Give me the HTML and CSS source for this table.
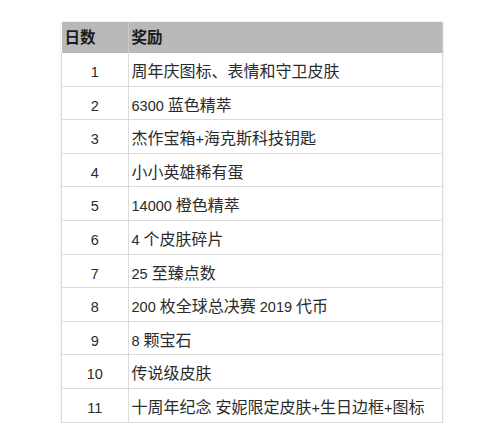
FILE: index.html
```html
<!DOCTYPE html>
<html lang="zh">
<head>
<meta charset="utf-8">
<link rel="stylesheet" href="styles.css">
</head>
<body>
<table class="rewards">
  <thead>
    <tr><th class="day">日数</th><th class="reward">奖励</th></tr>
  </thead>
  <tbody>
    <tr><td class="num">1</td><td>周年庆图标、表情和守卫皮肤</td></tr>
    <tr><td class="num">2</td><td><span class="lat">6300 </span>蓝色精萃</td></tr>
    <tr><td class="num">3</td><td>杰作宝箱<span class="lat">+</span>海克斯科技钥匙</td></tr>
    <tr><td class="num">4</td><td>小小英雄稀有蛋</td></tr>
    <tr><td class="num">5</td><td><span class="lat">14000 </span>橙色精萃</td></tr>
    <tr><td class="num">6</td><td><span class="lat">4 </span>个皮肤碎片</td></tr>
    <tr><td class="num">7</td><td><span class="lat">25 </span>至臻点数</td></tr>
    <tr><td class="num">8</td><td><span class="lat">200 </span>枚全球总决赛<span class="lat"> 2019 </span>代币</td></tr>
    <tr><td class="num">9</td><td><span class="lat">8 </span>颗宝石</td></tr>
    <tr><td class="num">10</td><td>传说级皮肤</td></tr>
    <tr><td class="num">11</td><td>十周年纪念<span class="lat"> </span>安妮限定皮肤<span class="lat">+</span>生日边框<span class="lat">+</span>图标</td></tr>
  </tbody>
</table>
</body>
</html>
```
FILE: styles.css
```css
html, body {
  margin: 0;
  padding: 0;
  background: #ffffff;
}
body {
  padding: 22px 0 0 61px;
  font-family: "Liberation Sans", "Noto Sans CJK SC", sans-serif;
  color: #2b2b2b;
  font-size: 16px;
}
.rewards {
  border-collapse: collapse;
  width: 382px;
  box-shadow: 0 0 2px rgba(0,0,0,0.15);
}
.rewards th {
  background: #b9b9b9;
  line-height: 20px;
  height: 20px;
  padding: 6px 3px 5px 3px;
  text-align: left;
  font-weight: bold;
  font-size: 15.5px;
  color: #1a1a1a;
  border-right: 1px solid #c8c8c8;
}
.rewards th.day {
  width: 60px;
}
.rewards td {
  line-height: 20px;
  height: 20px;
  padding: 9px 3px 3.6px 3px;
  border: 1px solid #dcdcdc;
  border-top: none;
  vertical-align: middle;
  white-space: nowrap;
}
.rewards td.num {
  text-align: center;
  font-size: 14.5px;
}
.lat {
  font-size: 14.5px;
  line-height: 1;
}
```
